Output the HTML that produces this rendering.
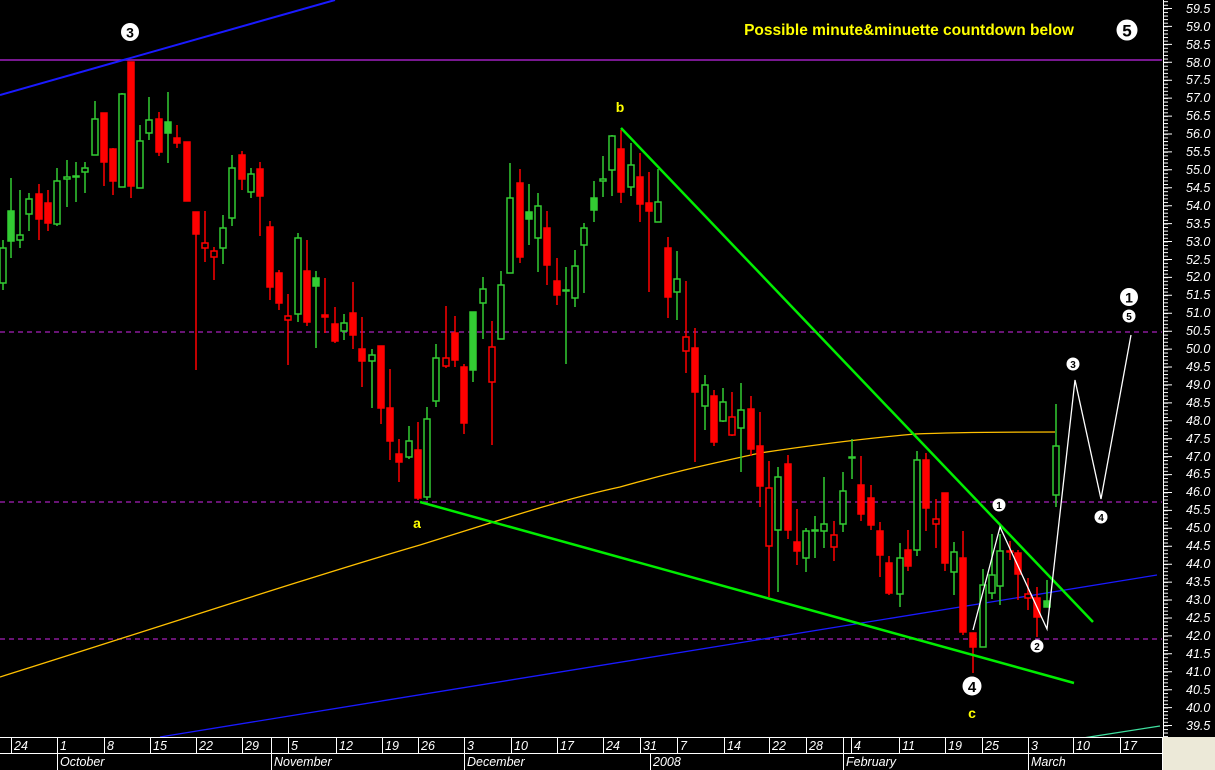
<!DOCTYPE html>
<html><head><meta charset="utf-8"><style>
html,body{margin:0;padding:0;background:#000;width:1215px;height:770px;overflow:hidden}
svg{display:block}
.G path,.GF path{stroke:#33cc33;stroke-width:1.5}
.R path,.RH path{stroke:#ff0000;stroke-width:1.5}
.G rect{fill:#000;stroke:#33cc33;stroke-width:1.5}
.GF rect{fill:#33cc33;stroke:#33cc33;stroke-width:1.5}
.R rect{fill:#f00;stroke:#f00;stroke-width:1.5}
.RH rect{fill:#000;stroke:#f00;stroke-width:1.5}
.ax{font-family:"Liberation Sans",sans-serif;font-style:italic;font-size:12.5px;fill:#fff}
.cn{font-family:"Liberation Sans",sans-serif;font-weight:bold;fill:#000;text-anchor:middle}
.yl{font-family:"Liberation Sans",sans-serif;font-weight:bold;fill:#ffff00;text-anchor:middle;font-size:14px}
</style></head><body>
<svg width="1215" height="770" viewBox="0 0 1215 770" xmlns="http://www.w3.org/2000/svg">
<rect width="1215" height="770" fill="#000"/>
<line x1="0" y1="60" x2="1162" y2="60" stroke="#a020c0" stroke-width="1.5"/>
<g stroke="#8a1a9a" stroke-width="1.5" stroke-dasharray="5,4">
<line x1="0" y1="332" x2="1162" y2="332"/>
<line x1="0" y1="502" x2="1162" y2="502"/>
<line x1="0" y1="639" x2="1162" y2="639"/>
</g>
<line x1="0" y1="95" x2="335" y2="0" stroke="#1a1aff" stroke-width="2"/>
<line x1="160" y1="737" x2="1157" y2="575" stroke="#1a1aff" stroke-width="1.3"/>
<path d="M0 677 C150 630 300 580 420 545 C500 520 560 500 620 487 C680 470 720 462 760 453 C820 444 870 438 915 434 C960 432 1010 432 1055 432" fill="none" stroke="#ffc000" stroke-width="1.3"/>
<g class="G"><path d="M3 240V290"/><rect x="0" y="248" width="6" height="35"/></g>
<g class="GF"><path d="M11 178V258"/><rect x="8" y="211" width="6" height="30"/></g>
<g class="G"><path d="M20 190V248"/><rect x="17" y="235" width="6" height="5"/></g>
<g class="G"><path d="M29 193V231"/><rect x="26" y="199" width="6" height="15"/></g>
<g class="R"><path d="M39 184V240"/><rect x="36" y="194" width="6" height="25"/></g>
<g class="R"><path d="M48 190V231"/><rect x="45" y="203" width="6" height="20"/></g>
<g class="G"><path d="M57 168V226"/><rect x="54" y="181" width="6" height="43"/></g>
<g class="G"><path d="M67 160V207"/><rect x="64" y="177" width="6" height="2"/></g>
<g class="G"><path d="M76 162V202"/><rect x="73" y="176" width="6" height="1"/></g>
<g class="G"><path d="M85 162V193"/><rect x="82" y="168" width="6" height="4"/></g>
<g class="G"><path d="M95 101V155"/><rect x="92" y="119" width="6" height="36"/></g>
<g class="R"><path d="M104 113V186"/><rect x="101" y="113" width="6" height="49"/></g>
<g class="R"><path d="M113 148V195"/><rect x="110" y="149" width="6" height="32"/></g>
<g class="G"><path d="M122 93V187"/><rect x="119" y="94" width="6" height="93"/></g>
<g class="R"><path d="M131 62V198"/><rect x="128" y="62" width="6" height="124"/></g>
<g class="G"><path d="M140 125V188"/><rect x="137" y="141" width="6" height="47"/></g>
<g class="G"><path d="M149 97V140"/><rect x="146" y="120" width="6" height="13"/></g>
<g class="R"><path d="M159 112V156"/><rect x="156" y="119" width="6" height="33"/></g>
<g class="GF"><path d="M168 92V163"/><rect x="165" y="122" width="6" height="11"/></g>
<g class="R"><path d="M177 125V148"/><rect x="174" y="138" width="6" height="5"/></g>
<g class="R"><path d="M187 142V201"/><rect x="184" y="142" width="6" height="59"/></g>
<g class="R"><path d="M196 212V370"/><rect x="193" y="212" width="6" height="22"/></g>
<g class="RH"><path d="M205 211V262"/><rect x="202" y="243" width="6" height="5"/></g>
<g class="RH"><path d="M214 247V280"/><rect x="211" y="251" width="6" height="6"/></g>
<g class="G"><path d="M223 215V264"/><rect x="220" y="228" width="6" height="20"/></g>
<g class="G"><path d="M232 155V226"/><rect x="229" y="168" width="6" height="50"/></g>
<g class="R"><path d="M242 151V190"/><rect x="239" y="155" width="6" height="24"/></g>
<g class="G"><path d="M251 168V198"/><rect x="248" y="174" width="6" height="18"/></g>
<g class="R"><path d="M260 162V236"/><rect x="257" y="169" width="6" height="27"/></g>
<g class="R"><path d="M270 221V300"/><rect x="267" y="227" width="6" height="60"/></g>
<g class="R"><path d="M279 270V310"/><rect x="276" y="273" width="6" height="30"/></g>
<g class="RH"><path d="M288 294V365"/><rect x="285" y="316" width="6" height="4"/></g>
<g class="G"><path d="M298 233V322"/><rect x="295" y="238" width="6" height="76"/></g>
<g class="R"><path d="M307 240V326"/><rect x="304" y="271" width="6" height="51"/></g>
<g class="GF"><path d="M316 271V348"/><rect x="313" y="278" width="6" height="8"/></g>
<g class="R"><path d="M325 278V333"/><rect x="322" y="315" width="6" height="2"/></g>
<g class="R"><path d="M335 307V343"/><rect x="332" y="324" width="6" height="17"/></g>
<g class="G"><path d="M344 314V340"/><rect x="341" y="323" width="6" height="8"/></g>
<g class="R"><path d="M353 282V349"/><rect x="350" y="313" width="6" height="22"/></g>
<g class="R"><path d="M362 317V387"/><rect x="359" y="349" width="6" height="12"/></g>
<g class="G"><path d="M372 349V408"/><rect x="369" y="355" width="6" height="6"/></g>
<g class="R"><path d="M381 346V424"/><rect x="378" y="346" width="6" height="62"/></g>
<g class="R"><path d="M390 369V460"/><rect x="387" y="408" width="6" height="33"/></g>
<g class="R"><path d="M399 439V482"/><rect x="396" y="454" width="6" height="8"/></g>
<g class="G"><path d="M409 426V459"/><rect x="406" y="441" width="6" height="16"/></g>
<g class="R"><path d="M418 422V500"/><rect x="415" y="450" width="6" height="48"/></g>
<g class="G"><path d="M427 407V500"/><rect x="424" y="419" width="6" height="78"/></g>
<g class="G"><path d="M436 344V407"/><rect x="433" y="358" width="6" height="43"/></g>
<g class="RH"><path d="M446 306V368"/><rect x="443" y="358" width="6" height="8"/></g>
<g class="R"><path d="M455 316V367"/><rect x="452" y="333" width="6" height="27"/></g>
<g class="R"><path d="M464 364V434"/><rect x="461" y="367" width="6" height="56"/></g>
<g class="GF"><path d="M473 312V382"/><rect x="470" y="312" width="6" height="58"/></g>
<g class="G"><path d="M483 277V339"/><rect x="480" y="289" width="6" height="14"/></g>
<g class="RH"><path d="M492 321V445"/><rect x="489" y="347" width="6" height="35"/></g>
<g class="G"><path d="M501 271V339"/><rect x="498" y="285" width="6" height="54"/></g>
<g class="G"><path d="M510 163V273"/><rect x="507" y="198" width="6" height="75"/></g>
<g class="R"><path d="M520 169V263"/><rect x="517" y="183" width="6" height="74"/></g>
<g class="GF"><path d="M529 184V245"/><rect x="526" y="212" width="6" height="7"/></g>
<g class="G"><path d="M538 193V272"/><rect x="535" y="206" width="6" height="32"/></g>
<g class="R"><path d="M547 211V285"/><rect x="544" y="228" width="6" height="37"/></g>
<g class="R"><path d="M557 258V305"/><rect x="554" y="281" width="6" height="14"/></g>
<g class="G"><path d="M566 267V364"/><rect x="563" y="290" width="6" height="1"/></g>
<g class="G"><path d="M575 250V307"/><rect x="572" y="266" width="6" height="32"/></g>
<g class="G"><path d="M584 223V293"/><rect x="581" y="228" width="6" height="17"/></g>
<g class="GF"><path d="M594 181V222"/><rect x="591" y="198" width="6" height="12"/></g>
<g class="G"><path d="M603 156V197"/><rect x="600" y="179" width="6" height="2"/></g>
<g class="G"><path d="M612 135V196"/><rect x="609" y="136" width="6" height="34"/></g>
<g class="R"><path d="M621 130V203"/><rect x="618" y="149" width="6" height="43"/></g>
<g class="G"><path d="M631 143V196"/><rect x="628" y="165" width="6" height="22"/></g>
<g class="R"><path d="M640 153V222"/><rect x="637" y="177" width="6" height="27"/></g>
<g class="R"><path d="M649 172V292"/><rect x="646" y="203" width="6" height="8"/></g>
<g class="G"><path d="M658 169V222"/><rect x="655" y="202" width="6" height="20"/></g>
<g class="R"><path d="M668 237V318"/><rect x="665" y="248" width="6" height="49"/></g>
<g class="G"><path d="M677 251V320"/><rect x="674" y="279" width="6" height="13"/></g>
<g class="RH"><path d="M686 281V373"/><rect x="683" y="337" width="6" height="14"/></g>
<g class="R"><path d="M695 328V462"/><rect x="692" y="348" width="6" height="44"/></g>
<g class="G"><path d="M705 375V430"/><rect x="702" y="385" width="6" height="21"/></g>
<g class="R"><path d="M714 390V446"/><rect x="711" y="396" width="6" height="46"/></g>
<g class="G"><path d="M723 388V422"/><rect x="720" y="402" width="6" height="19"/></g>
<g class="RH"><path d="M732 392V436"/><rect x="729" y="417" width="6" height="18"/></g>
<g class="G"><path d="M741 383V472"/><rect x="738" y="410" width="6" height="18"/></g>
<g class="R"><path d="M751 396V456"/><rect x="748" y="409" width="6" height="40"/></g>
<g class="R"><path d="M760 412V507"/><rect x="757" y="446" width="6" height="40"/></g>
<g class="RH"><path d="M769 461V597"/><rect x="766" y="488" width="6" height="58"/></g>
<g class="G"><path d="M778 467V592"/><rect x="775" y="477" width="6" height="53"/></g>
<g class="R"><path d="M788 455V539"/><rect x="785" y="464" width="6" height="66"/></g>
<g class="R"><path d="M797 509V565"/><rect x="794" y="542" width="6" height="9"/></g>
<g class="G"><path d="M806 528V572"/><rect x="803" y="531" width="6" height="27"/></g>
<g class="G"><path d="M815 516V558"/><rect x="812" y="530" width="6" height="1"/></g>
<g class="G"><path d="M824 477V548"/><rect x="821" y="524" width="6" height="7"/></g>
<g class="RH"><path d="M834 521V561"/><rect x="831" y="535" width="6" height="12"/></g>
<g class="G"><path d="M843 472V532"/><rect x="840" y="491" width="6" height="33"/></g>
<g class="G"><path d="M852 439V479"/><rect x="849" y="457" width="6" height="1"/></g>
<g class="R"><path d="M861 456V521"/><rect x="858" y="485" width="6" height="29"/></g>
<g class="R"><path d="M871 485V530"/><rect x="868" y="498" width="6" height="27"/></g>
<g class="R"><path d="M880 522V577"/><rect x="877" y="531" width="6" height="24"/></g>
<g class="R"><path d="M889 556V595"/><rect x="886" y="563" width="6" height="30"/></g>
<g class="G"><path d="M900 543V607"/><rect x="897" y="558" width="6" height="36"/></g>
<g class="R"><path d="M908 530V571"/><rect x="905" y="550" width="6" height="16"/></g>
<g class="G"><path d="M917 451V556"/><rect x="914" y="460" width="6" height="90"/></g>
<g class="R"><path d="M926 453V531"/><rect x="923" y="460" width="6" height="48"/></g>
<g class="RH"><path d="M936 499V548"/><rect x="933" y="519" width="6" height="5"/></g>
<g class="R"><path d="M945 493V571"/><rect x="942" y="493" width="6" height="70"/></g>
<g class="G"><path d="M954 542V595"/><rect x="951" y="552" width="6" height="20"/></g>
<g class="R"><path d="M963 531V635"/><rect x="960" y="558" width="6" height="74"/></g>
<g class="R"><path d="M973 633V673"/><rect x="970" y="633" width="6" height="14"/></g>
<g class="G"><path d="M983 569V647"/><rect x="980" y="585" width="6" height="62"/></g>
<g class="G"><path d="M992 534V599"/><rect x="989" y="575" width="6" height="18"/></g>
<g class="G"><path d="M1000 534V605"/><rect x="997" y="551" width="6" height="35"/></g>
<g class="R"><path d="M1010 541V560"/><rect x="1007" y="551" width="6" height="1"/></g>
<g class="R"><path d="M1018 550V600"/><rect x="1015" y="553" width="6" height="21"/></g>
<g class="RH"><path d="M1028 578V610"/><rect x="1025" y="594" width="6" height="4"/></g>
<g class="R"><path d="M1037 587V637"/><rect x="1034" y="598" width="6" height="19"/></g>
<g class="GF"><path d="M1047 580V606"/><rect x="1044" y="601" width="6" height="6"/></g>
<g class="G"><path d="M1056 404V507"/><rect x="1053" y="446" width="6" height="49"/></g>
<line x1="621" y1="128" x2="1093" y2="622" stroke="#00ee00" stroke-width="2.5"/>
<line x1="420" y1="502" x2="1074" y2="683" stroke="#00ee00" stroke-width="2.5"/>
<line x1="1070" y1="740" x2="1160" y2="726" stroke="#40e0a0" stroke-width="1.3"/>
<polyline points="973,630 1000,527 1047,629 1075,380 1101,499 1131,335" fill="none" stroke="#fff" stroke-width="1.3"/>
<circle cx="130" cy="32" r="9" fill="#fff"/><text class="cn" x="130" y="37.5" font-size="14">3</text>
<circle cx="1127" cy="30" r="10.5" fill="#fff"/><text class="cn" x="1127" y="36.5" font-size="17">5</text>
<circle cx="1129" cy="297" r="9" fill="#fff"/><text class="cn" x="1129" y="302.5" font-size="14">1</text>
<circle cx="1129" cy="316" r="6.5" fill="#fff"/><text class="cn" x="1129" y="320" font-size="10">5</text>
<circle cx="1073" cy="364" r="6.5" fill="#fff"/><text class="cn" x="1073" y="368" font-size="10">3</text>
<circle cx="1101" cy="517" r="6.5" fill="#fff"/><text class="cn" x="1101" y="521" font-size="10">4</text>
<circle cx="999" cy="505" r="6.5" fill="#fff"/><text class="cn" x="999" y="509" font-size="10">1</text>
<circle cx="1037" cy="646" r="6.5" fill="#fff"/><text class="cn" x="1037" y="650" font-size="10">2</text>
<circle cx="972" cy="686" r="9.5" fill="#fff"/><text class="cn" x="972" y="692" font-size="15">4</text>
<text class="yl" x="620" y="112">b</text>
<text class="yl" x="417" y="528">a</text>
<text class="yl" x="972" y="718">c</text>
<text x="909" y="35" font-family="Liberation Sans,sans-serif" font-weight="bold" font-size="15.5" fill="#ffff00" text-anchor="middle">Possible minute&amp;minuette countdown below</text>
<rect x="1163" y="0" width="52" height="737" fill="#000"/>
<line x1="1163.5" y1="0" x2="1163.5" y2="737" stroke="#fff"/>
<defs><pattern id="tk" x="1163" y="1.2" width="10" height="3.585" patternUnits="userSpaceOnUse"><rect x="0" y="0" width="5" height="1" fill="#fff"/></pattern></defs>
<rect x="1163" y="0" width="6" height="737" fill="url(#tk)"/>
<g stroke="#fff" stroke-width="1">
<path d="M1163 8.5h9M1163 26.4h9M1163 44.4h9M1163 62.3h9M1163 80.2h9M1163 98.1h9M1163 116.1h9M1163 134h9M1163 151.9h9M1163 169.8h9M1163 187.8h9M1163 205.7h9M1163 223.6h9M1163 241.5h9M1163 259.5h9M1163 277.4h9M1163 295.3h9M1163 313.2h9M1163 331.2h9M1163 349.1h9M1163 367h9M1163 384.9h9M1163 402.9h9M1163 420.8h9M1163 438.7h9M1163 456.6h9M1163 474.6h9M1163 492.5h9M1163 510.4h9M1163 528.3h9M1163 546.3h9M1163 564.2h9M1163 582.1h9M1163 600h9M1163 618h9M1163 635.9h9M1163 653.8h9M1163 671.7h9M1163 689.7h9M1163 707.6h9M1163 725.5h9"/>
</g>
<g class="ax">
<text x="1186" y="13">59.5</text><text x="1186" y="31">59.0</text><text x="1186" y="49">58.5</text><text x="1186" y="67">58.0</text><text x="1186" y="84">57.5</text><text x="1186" y="102">57.0</text><text x="1186" y="120">56.5</text><text x="1186" y="138">56.0</text><text x="1186" y="156">55.5</text><text x="1186" y="174">55.0</text><text x="1186" y="192">54.5</text><text x="1186" y="210">54.0</text><text x="1186" y="228">53.5</text><text x="1186" y="246">53.0</text><text x="1186" y="264">52.5</text><text x="1186" y="281">52.0</text><text x="1186" y="299">51.5</text><text x="1186" y="317">51.0</text><text x="1186" y="335">50.5</text><text x="1186" y="353">50.0</text><text x="1186" y="371">49.5</text><text x="1186" y="389">49.0</text><text x="1186" y="407">48.5</text><text x="1186" y="425">48.0</text><text x="1186" y="443">47.5</text><text x="1186" y="461">47.0</text><text x="1186" y="478">46.5</text><text x="1186" y="496">46.0</text><text x="1186" y="514">45.5</text><text x="1186" y="532">45.0</text><text x="1186" y="550">44.5</text><text x="1186" y="568">44.0</text><text x="1186" y="586">43.5</text><text x="1186" y="604">43.0</text><text x="1186" y="622">42.5</text><text x="1186" y="640">42.0</text><text x="1186" y="658">41.5</text><text x="1186" y="676">41.0</text><text x="1186" y="694">40.5</text><text x="1186" y="712">40.0</text><text x="1186" y="730">39.5</text>
</g>
<rect x="0" y="737" width="1163" height="33" fill="#000"/>
<rect x="1163" y="737" width="52" height="33" fill="#ece9d8"/>
<g stroke="#fff" stroke-width="1">
<line x1="0" y1="737.5" x2="1163" y2="737.5"/>
<line x1="0" y1="753.5" x2="1163" y2="753.5"/>
<path d="M11.5 737v16M57.5 737v33M104.5 737v16M150.5 737v16M196.5 737v16M242.5 737v16M271.5 737v33M288.5 737v16M336.5 737v16M382.5 737v16M418.5 737v16M464.5 737v33M511.5 737v16M557.5 737v16M603.5 737v16M640.5 737v16M650.5 753v17M677.5 737v16M724.5 737v16M769.5 737v16M806.5 737v16M843.5 737v33M851.5 737v16M899.5 737v16M945.5 737v16M982.5 737v16M1028.5 737v33M1073.5 737v16M1120.5 737v16M1162.5 737v33"/>
</g>
<g class="ax">
<text x="14" y="750">24</text><text x="60" y="750">1</text><text x="107" y="750">8</text><text x="153" y="750">15</text><text x="199" y="750">22</text><text x="245" y="750">29</text><text x="291" y="750">5</text><text x="339" y="750">12</text><text x="385" y="750">19</text><text x="421" y="750">26</text><text x="467" y="750">3</text><text x="514" y="750">10</text><text x="560" y="750">17</text><text x="606" y="750">24</text><text x="643" y="750">31</text><text x="680" y="750">7</text><text x="727" y="750">14</text><text x="772" y="750">22</text><text x="809" y="750">28</text><text x="854" y="750">4</text><text x="902" y="750">11</text><text x="948" y="750">19</text><text x="985" y="750">25</text><text x="1031" y="750">3</text><text x="1076" y="750">10</text><text x="1123" y="750">17</text>
<text x="60" y="766">October</text><text x="274" y="766">November</text><text x="467" y="766">December</text><text x="653" y="766">2008</text><text x="846" y="766">February</text><text x="1031" y="766">March</text>
</g>
</svg>
</body></html>
